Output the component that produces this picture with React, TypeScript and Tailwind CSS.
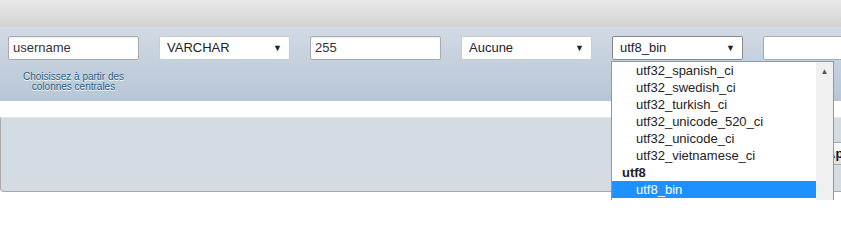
import React from 'react';

const font = "font-['Liberation_Sans',Arial,sans-serif]";

const Field: React.FC<{ value: string }> = ({ value }) => (
  <div className="shrink-0 w-[131px] h-[24px] bg-white border border-[#aaaaaa] rounded-[2px] shadow-[inset_0_1px_2px_rgba(0,0,0,0.08)] flex items-center px-[4px] text-[13px] text-[#333333]">
    {value}
  </div>
);

const Select: React.FC<{ value: string; open?: boolean }> = ({ value, open }) => (
  <div
    className={`shrink-0 w-[131px] h-[24px] bg-white border rounded-[2px] flex items-center justify-between pl-[7px] pr-[7px] text-[13px] text-[#222222] ${
      open ? 'border-[#888888]' : 'border-[#cccccc]'
    }`}
  >
    <span>{value}</span>
    <span className="text-[9px] leading-none text-[#222222]">▼</span>
  </div>
);

const items: { label: string; group?: boolean; selected?: boolean }[] = [
  { label: 'utf32_spanish_ci' },
  { label: 'utf32_swedish_ci' },
  { label: 'utf32_turkish_ci' },
  { label: 'utf32_unicode_520_ci' },
  { label: 'utf32_unicode_ci' },
  { label: 'utf32_vietnamese_ci' },
  { label: 'utf8', group: true },
  { label: 'utf8_bin', selected: true },
  { label: 'utf8_general_ci' },
];

export default function App() {
  return (
    <div className={`relative w-[841px] h-[200px] overflow-hidden bg-white ${font}`}>
      {/* top bar */}
      <div className="h-[27px] bg-gradient-to-b from-[#e9e9e9] to-[#d2d2d2]" />

      {/* column row */}
      <div className="h-[74px] bg-gradient-to-b from-[#d2dae4] to-[#b7c6d6] flex items-start gap-[20px] pl-[8px] pt-[9px]">
        <div className="shrink-0 flex flex-col items-center">
          <Field value="username" />
          <p className="mt-[12px] text-[10px] leading-[10px] text-center text-[#235a81] [text-shadow:0_1px_0_#ffffff]">
            Choisissez à partir des
            <br />
            colonnes centrales
          </p>
        </div>
        <Select value="VARCHAR" />
        <Field value="255" />
        <Select value="Aucune" />
        <Select value="utf8_bin" open />
        <div className="shrink-0 w-[131px] h-[24px] bg-white border border-[#aaaaaa] rounded-[2px]" />
      </div>

      {/* bottom panel */}
      <div className="h-[16px]" />
      <div className="h-[75px] w-[960px] bg-[#d4dbe2] border-l border-b border-t border-l-[#aaaaaa] border-b-[#a8a8a8] border-t-[#e3e7eb] rounded-bl-[4px] flex items-start pt-[24px] pl-[817px]">
        <button className="shrink-0 h-[23px] px-[7px] border border-[#aaaaaa] bg-gradient-to-b from-[#ffffff] to-[#e0e0e0] rounded-[3px] text-[13px] font-bold text-[#111111] whitespace-nowrap">
          Aperçu SQL
        </button>
      </div>

      {/* open dropdown */}
      <div className="absolute left-[611px] top-[61px] w-[223px] h-[150px] bg-white border border-[#7f9db9] flex">
        <ul className="flex-1 text-[13px] leading-[17px] text-[#222222]">
          {items.map((it) => (
            <li
              key={it.label}
              className={
                it.group
                  ? 'pl-[10px] font-bold'
                  : it.selected
                  ? 'pl-[24px] bg-[#1e90ff] text-white'
                  : 'pl-[24px]'
              }
            >
              {it.label}
            </li>
          ))}
        </ul>
        <div className="w-[17px] bg-[#f0f0f0] flex justify-center pt-[6px]">
          <span className="text-[8px] leading-none text-[#555555]">▲</span>
        </div>
      </div>
    </div>
  );
}
